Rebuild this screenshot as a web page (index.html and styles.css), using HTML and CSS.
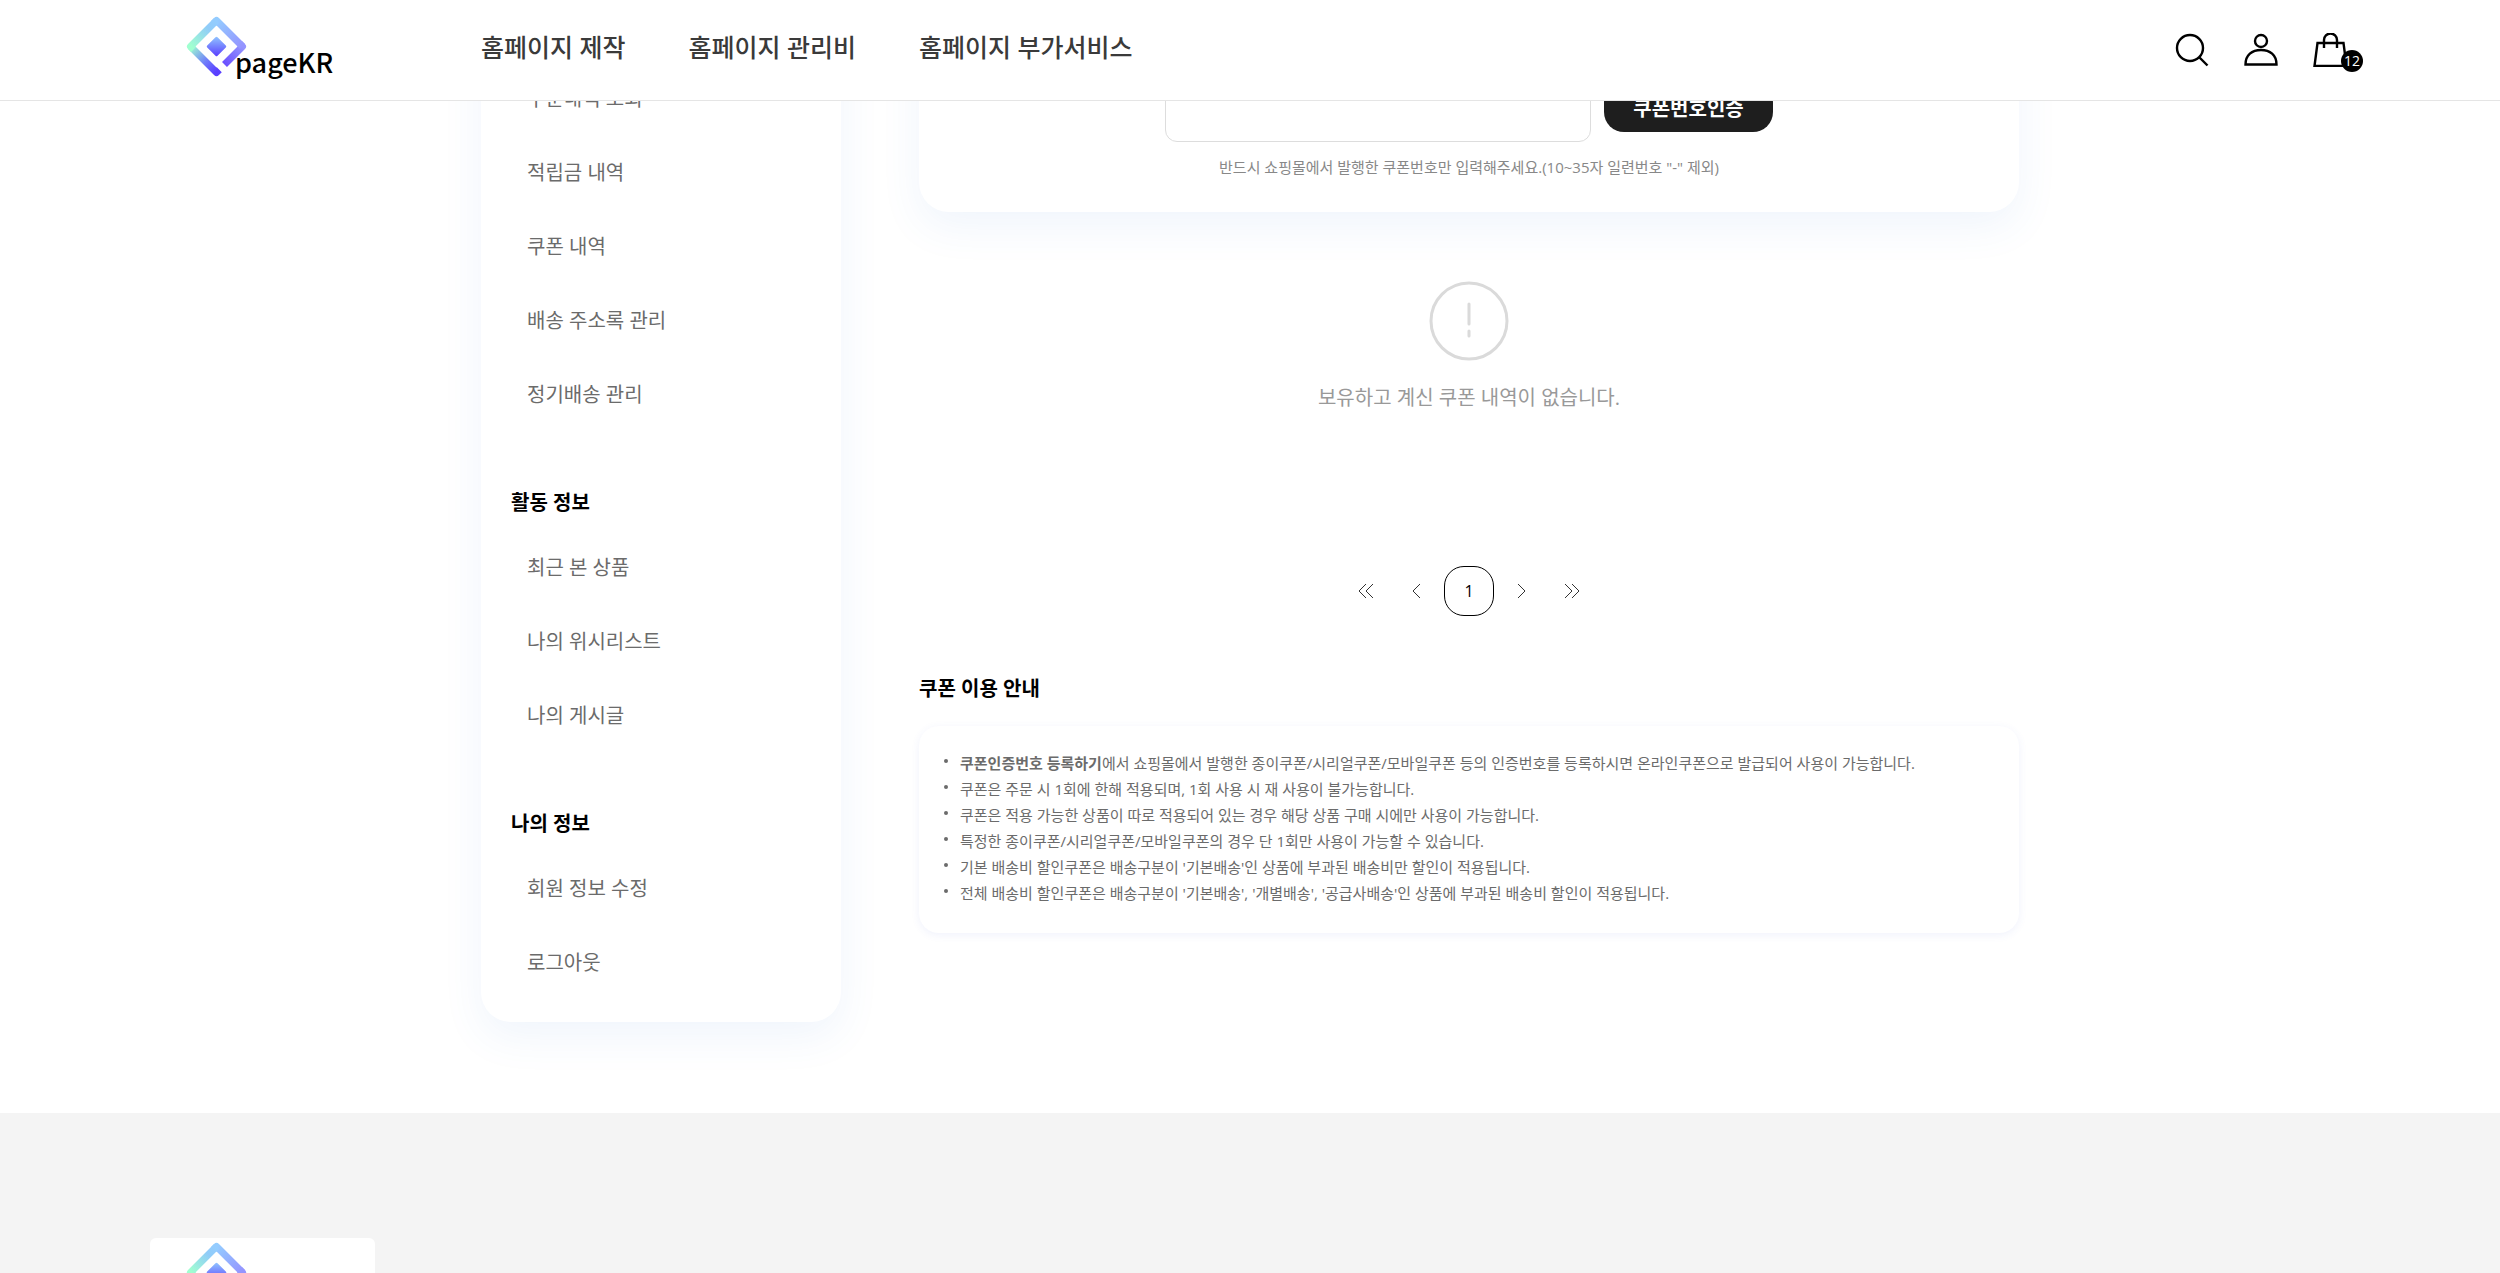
FILE: index.html
```html
<!DOCTYPE html>
<html lang="ko">
  <head>
    <meta charset="utf-8">
    <title>pageKR - 쿠폰 내역</title>
    <link rel="stylesheet" href="styles.css">
  </head>
  <body>
    <header class="header">
      <a href="#" class="logo" aria-label="pageKR">
        <svg width="225" height="76" viewBox="0 0 225 76">
          <defs>
            <linearGradient id="g1" gradientUnits="userSpaceOnUse" x1="41" y1="34" x2="66" y2="60"><stop offset="0" stop-color="#a0ffd0"/><stop offset=".6" stop-color="#6f7cfb"/><stop offset="1" stop-color="#5a3fff"/></linearGradient>
            <linearGradient id="g2" gradientUnits="userSpaceOnUse" x1="41" y1="34" x2="66" y2="9"><stop offset="0" stop-color="#a0ffd0"/><stop offset=".7" stop-color="#90ccf8"/><stop offset="1" stop-color="#94ccff"/></linearGradient>
            <linearGradient id="g3" gradientUnits="userSpaceOnUse" x1="66" y1="9" x2="92" y2="34"><stop offset="0" stop-color="#94ccff"/><stop offset="1" stop-color="#9494ff"/></linearGradient>
            <linearGradient id="g4" gradientUnits="userSpaceOnUse" x1="92" y1="34" x2="74" y2="52"><stop offset="0" stop-color="#9494ff"/><stop offset="1" stop-color="#6a4fff"/></linearGradient>
            <linearGradient id="g5" x1="0" y1="0" x2="0" y2="1"><stop offset="0" stop-color="#90c4ff"/><stop offset="1" stop-color="#5a3fff"/></linearGradient>
          </defs>
          <g id="mark" fill="none" stroke-width="7" stroke-linejoin="round">
            <path stroke="url(#g1)" d="M69.3 57.7L66.5 60.5L40.5 34.5"/>
            <path stroke="url(#g4)" d="M89.5 31.5L92.5 34.5L74.5 52.5"/>
            <path stroke="url(#g3)" d="M63.5 11.5L66.5 8.5L92.5 34.5"/>
            <path stroke="url(#g2)" d="M43.5 37.5L40.5 34.5L66.5 8.5"/>
            <path fill="url(#g5)" stroke="none" d="M65.500 25.200q1-1 2 0l8.300 8.300q1 1 0 2l-8.300 8.300q-1 1-2 0l-8.300-8.300q-1-1 0-2z"/>
          </g>
          <text x="85" y="61" class="logo-text">pageKR</text>
        </svg>
      </a>
      <nav class="gnb">
        <a href="#">홈페이지 제작</a>
        <a href="#">홈페이지 관리비</a>
        <a href="#">홈페이지 부가서비스</a>
      </nav>
      <div class="util">
        <button type="button" aria-label="검색">
          <svg width="34" height="34" viewBox="0 0 34 34"><circle cx="15" cy="15" r="13"/><path d="M24 24l8.500 8.500"/></svg>
        </button>
        <a href="#" aria-label="마이페이지">
          <svg width="34" height="34" viewBox="0 0 34 34"><circle cx="17" cy="8" r="6"/><path d="M1.500 31.500C1.500 22 8 17 17 17s15.500 5 15.500 14.500z"/></svg>
        </a>
        <a href="#" class="cart" aria-label="장바구니">
          <svg width="34" height="34" viewBox="0 0 34 34"><path d="M4.500 10h26l3 23h-32zM11 15V7a6 6 0 0 1 13 0v8"/></svg>
          <span class="badge">12</span>
        </a>
      </div>
    </header>

    <div class="container">
      <aside class="side">
        <ul>
          <li><a href="#">주문내역 조회</a></li>
          <li><a href="#">적립금 내역</a></li>
          <li><a href="#">쿠폰 내역</a></li>
          <li><a href="#">배송 주소록 관리</a></li>
          <li><a href="#">정기배송 관리</a></li>
        </ul>
        <h3>활동 정보</h3>
        <ul>
          <li><a href="#">최근 본 상품</a></li>
          <li><a href="#">나의 위시리스트</a></li>
          <li><a href="#">나의 게시글</a></li>
        </ul>
        <h3>나의 정보</h3>
        <ul>
          <li><a href="#">회원 정보 수정</a></li>
          <li><a href="#">로그아웃</a></li>
        </ul>
      </aside>

      <main class="content">
        <form class="coupon" action="">
          <div class="coupon-row">
            <input type="text" aria-label="쿠폰번호">
            <button type="button">쿠폰번호인증</button>
          </div>
          <p>반드시 쇼핑몰에서 발행한 쿠폰번호만 입력해주세요.(10~35자 일련번호 "-" 제외)</p>
        </form>

        <div class="empty">
          <svg width="80" height="80" viewBox="0 0 80 80"><circle cx="40" cy="40" r="38"/><path d="M40 23v20M40 50v5"/></svg>
          <p>보유하고 계신 쿠폰 내역이 없습니다.</p>
        </div>

        <nav class="paging">
          <a href="#" aria-label="첫 페이지"><svg width="16" height="16" viewBox="0 0 16 16"><path d="M8 1L1 8l7 7M15 1L8 8l7 7"/></svg></a>
          <a href="#" aria-label="이전 페이지"><svg width="16" height="16" viewBox="0 0 16 16"><path d="M12 1L5 8l7 7"/></svg></a>
          <a href="#" class="this">1</a>
          <a href="#" aria-label="다음 페이지"><svg width="16" height="16" viewBox="0 0 16 16"><path d="M4 1l7 7-7 7"/></svg></a>
          <a href="#" aria-label="마지막 페이지"><svg width="16" height="16" viewBox="0 0 16 16"><path d="M1 1l7 7-7 7M8 1l7 7-7 7"/></svg></a>
        </nav>

        <section class="guide">
          <h3>쿠폰 이용 안내</h3>
          <ul>
            <li><strong>쿠폰인증번호 등록하기</strong>에서 쇼핑몰에서 발행한 종이쿠폰/시리얼쿠폰/모바일쿠폰 등의 인증번호를 등록하시면 온라인쿠폰으로 발급되어 사용이 가능합니다.</li>
            <li>쿠폰은 주문 시 1회에 한해 적용되며, 1회 사용 시 재 사용이 불가능합니다.</li>
            <li>쿠폰은 적용 가능한 상품이 따로 적용되어 있는 경우 해당 상품 구매 시에만 사용이 가능합니다.</li>
            <li>특정한 종이쿠폰/시리얼쿠폰/모바일쿠폰의 경우 단 1회만 사용이 가능할 수 있습니다.</li>
            <li>기본 배송비 할인쿠폰은 배송구분이 '기본배송'인 상품에 부과된 배송비만 할인이 적용됩니다.</li>
            <li>전체 배송비 할인쿠폰은 배송구분이 '기본배송', '개별배송', '공급사배송'인 상품에 부과된 배송비 할인이 적용됩니다.</li>
          </ul>
        </section>
      </main>
    </div>

    <footer class="footer">
      <a href="#" class="footer-logo" aria-label="pageKR">
        <svg width="225" height="76" viewBox="0 0 225 76"><use href="#mark"/></svg>
      </a>
    </footer>
  </body>
</html>
```
FILE: styles.css
```css
* { box-sizing: border-box; }
body { margin: 0; height: 100vh; overflow: hidden; display: flex; flex-direction: column; background: #fff; color: #000; font-family: "Open Sans", "Noto Sans CJK KR", sans-serif; font-size: 20px; line-height: 30px; }
a { color: inherit; text-decoration: none; }
ul, p, h3 { margin: 0; padding: 0; list-style: none; }
h3 { font-size: 20px; font-weight: 700; }
svg { display: block; }

/* header */
.header { position: fixed; top: 0; left: 0; right: 0; z-index: 10; height: 101px; padding: 0 6%; display: flex; align-items: center; background: #fff; border-bottom: 1px solid #e5e5e5; }
.logo-text { font-family: "Noto Sans CJK KR", sans-serif; font-size: 27px; font-weight: 500; fill: #000; }
.gnb { display: flex; gap: 63px; margin-left: 106px; padding-bottom: 6px; font-size: 25px; font-weight: 500; color: #3a3a3a; }
.util { display: flex; gap: 35px; margin-left: auto; padding-right: 3px; }
.util button { padding: 0; border: 0; background: none; cursor: pointer; }
.util svg { fill: none; stroke: #000; stroke-width: 2; }
.util circle, .util path { stroke-width: 2.4; }
.cart { position: relative; }
.badge { position: absolute; right: -16px; bottom: -5px; width: 22px; height: 22px; border-radius: 50%; background: #000; color: #fff; font-size: 14px; line-height: 22px; text-align: center; }

/* layout */
.container { flex-shrink: 0; width: 100%; max-width: 1538px; margin: 0 auto; padding-bottom: 91px; display: flex; align-items: flex-start; gap: 78px; }

.side { flex: 0 0 360px; padding: 61px 30px 23px; border-radius: 0 0 30px 30px; background: #fff; box-shadow: 0 15px 40px rgba(60, 130, 220, 0.08); }
.side h3 { padding: 57px 0 12px; }
.side li { padding: 23px 16px 21px; color: #6b6b6b; }

.content { flex: 1; min-width: 0; }

/* coupon number */
.coupon { padding: 72px 30px 30px; border-radius: 0 0 30px 30px; background: #fff; box-shadow: 0 15px 40px rgba(60, 130, 220, 0.08); text-align: center; }
.coupon-row { display: flex; justify-content: center; align-items: center; gap: 13px; }
.coupon input { width: 426px; height: 70px; padding: 0 20px; border: 1px solid #ddd; border-radius: 12px; background: #fff; font: inherit; }
.coupon button { width: 169px; height: 50px; padding: 3px 0 0; border: 0; border-radius: 20px; background: #1e1e1e; color: #fff; font: inherit; font-weight: 700; }
.coupon p { margin-top: 10px; font-size: 15px; color: #888; }

.empty { padding-top: 69px; text-align: center; color: #999; }
.empty svg { margin: 0 auto 22px; fill: none; stroke: #dadada; stroke-width: 3; stroke-linecap: round; }

.paging { display: flex; justify-content: center; margin-top: 153px; }
.paging a { width: 50px; height: 50px; display: flex; align-items: center; justify-content: center; font-size: 16px; }
.paging svg { fill: none; stroke: #333; stroke-width: 1; }
.paging .this { margin: 0 3px; border: 1px solid #000; border-radius: 20px; }

/* guide */
.guide { margin-top: 58px; }
.guide ul { margin-top: 22px; padding: 24px 24px 27px; border-radius: 20px; box-shadow: 0 2px 8px rgba(60, 90, 220, 0.08); font-size: 15px; line-height: 26px; color: #6b6b6b; }
.guide li { display: flex; }
.guide li::before { content: ""; flex: none; width: 4px; height: 4px; margin: 9px 12px 0 1px; border-radius: 50%; background: #6b6b6b; }

/* footer */
.footer { flex: 1 0 0; padding: 125px 6% 0; background: #f4f4f4; }
.footer-logo { display: block; width: 225px; border-radius: 6px; background: #fff; }
```
